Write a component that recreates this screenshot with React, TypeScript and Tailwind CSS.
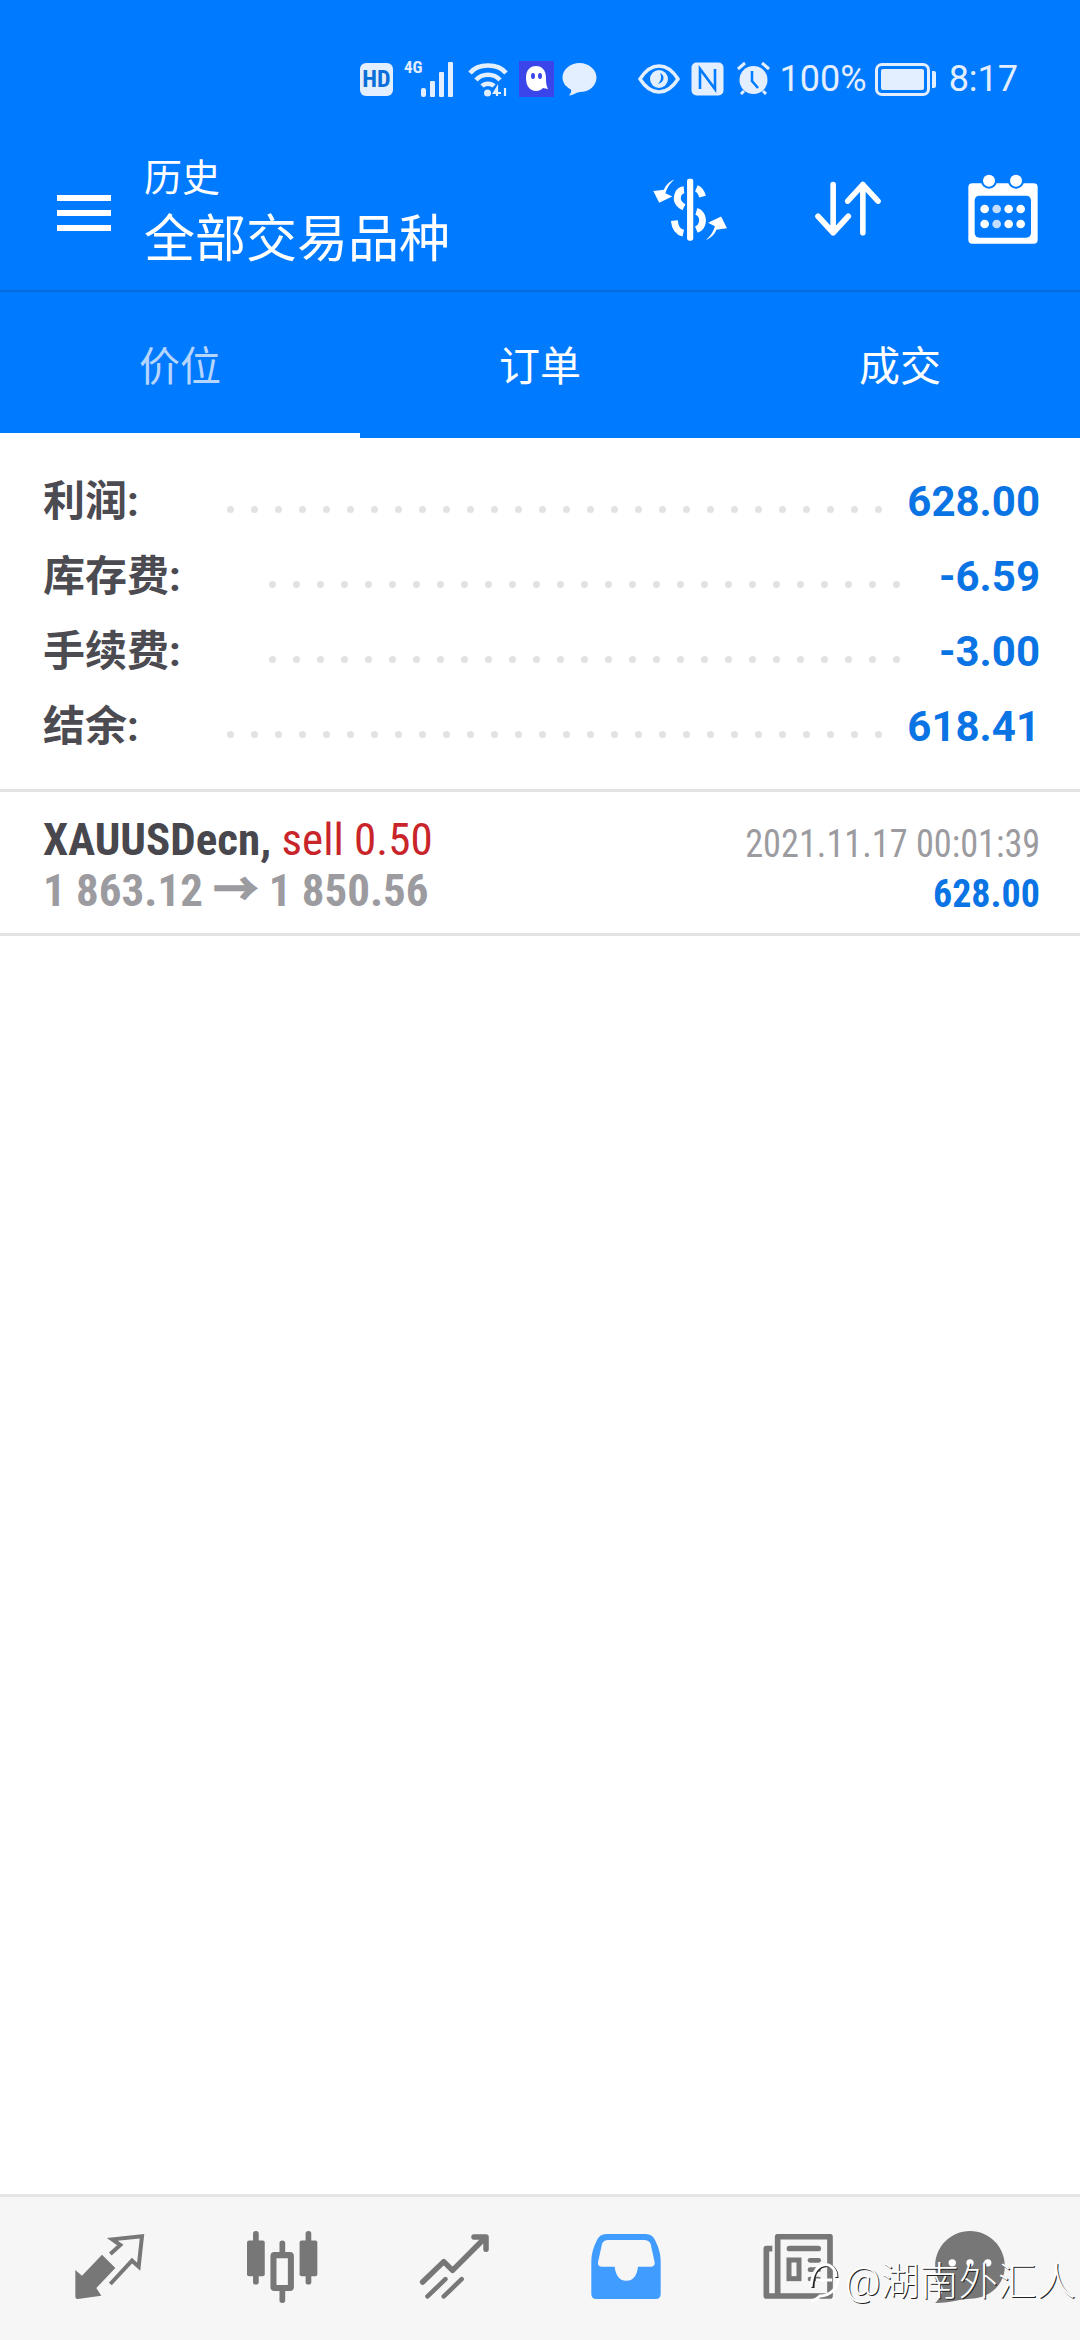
import React from 'react';

const summaryRows = [
  { label: '利润:', value: '628.00', dots: 28 },
  { label: '库存费:', value: '-6.59', dots: 27 },
  { label: '手续费:', value: '-3.00', dots: 27 },
  { label: '结余:', value: '618.41', dots: 28 },
];

const SignalIcon = () => (
  <svg width="34" height="36" viewBox="0 0 34 36" className="ml-[-2px]">
    <rect x="0" y="27" width="5" height="9" rx="2" fill="#e3eeff" />
    <rect x="9" y="20" width="5" height="16" rx="1" fill="#e3eeff" />
    <rect x="18" y="11" width="5" height="25" rx="1" fill="#e3eeff" />
    <rect x="27" y="1" width="5" height="35" rx="1" fill="#e3eeff" />
  </svg>
);

const WifiIcon = () => (
  <svg width="42" height="36" viewBox="0 0 42 36" fill="none" stroke="#e3eeff" strokeWidth="4.5">
    <path d="M2 12 C10 2 30 2 38 12" />
    <path d="M8 19 C14 12 26 12 32 19" />
    <path d="M14 25 C17 22 23 22 26 25" />
    <circle cx="19.5" cy="32" r="3.5" fill="#e3eeff" stroke="none" />
    <path d="M29 35 V27 L26 32 H33 M37 35 V27" strokeWidth="2.2" />
  </svg>
);

const GhostApp = () => (
  <div className="flex h-[36px] w-[35px] items-center justify-center bg-[#3b46ea]">
    <svg width="26" height="28" viewBox="0 0 26 28">
      <path d="M3 13 C3 4 8 1 13 1 C18 1 23 4 23 13 C23 17 23 20 25 24 L20 23 C18 25 16 26 13 26 C7 26 3 21 3 13 Z" fill="#fff" />
      <ellipse cx="10" cy="11" rx="2" ry="3" fill="#3b46ea" />
      <ellipse cx="17" cy="11" rx="2" ry="3" fill="#3b46ea" />
    </svg>
  </div>
);

const BubbleIcon = () => (
  <svg width="35" height="34" viewBox="0 0 35 34">
    <path d="M17.5 1 C27 1 34.500 8 34.500 15.500 C34.500 24 27 30 18 30 C15 30 12 33 7 33.500 C9 31 9.500 29 9 27.500 C4 25 0.500 21 0.500 15.500 C0.500 8 8 1 17.500 1 Z" fill="#e3eeff" />
  </svg>
);

const EyeIcon = () => (
  <svg width="42" height="30" viewBox="0 0 42 30" fill="none">
    <path d="M2 15 C9 4 15 2 21 2 C27 2 33 4 40 15 C33 26 27 28 21 28 C15 28 9 26 2 15 Z" stroke="#e3eeff" strokeWidth="3.5" />
    <circle cx="21" cy="15" r="9" fill="#e3eeff" />
    <path d="M22 9 C27 11 27 18 20 20 C23 17 24 13 22 9 Z" fill="#007aff" />
  </svg>
);

const NfcIcon = () => (
  <svg width="33" height="34" viewBox="0 0 33 34">
    <rect x="0.500" y="0.500" width="32" height="33" rx="5" fill="#e3eeff" />
    <path d="M9 27 V7 L24 27 V7" fill="none" stroke="#007aff" strokeWidth="2.6" />
  </svg>
);

const AlarmIcon = () => (
  <svg width="35" height="36" viewBox="0 0 35 36" fill="none">
    <circle cx="17.500" cy="19" r="14" fill="#e3eeff" />
    <path d="M16 10 V20 L22 27" stroke="#007aff" strokeWidth="2.5" />
    <path d="M2 8 L9 2 M33 8 L26 2 M5 33 L8 30 M30 33 L27 30" stroke="#e3eeff" strokeWidth="3" />
  </svg>
);

const BatteryIcon = () => (
  <div className="flex items-center gap-[2px]">
    <div className="h-[33px] w-[55px] rounded-[7px] border-[3px] border-[#e3eeff] p-[3px]">
      <div className="h-full w-full rounded-[2px] bg-[#e3eeff]" />
    </div>
    <div className="h-[17px] w-[4px] rounded-r-[2px] bg-[#e3eeff]" />
  </div>
);

const StatusBar = () => (
  <div className="flex h-[150px] items-start pt-[61px] pl-[360px] text-[#e3eeff]">
    <div className="flex h-[36px] items-center">
      <div className="flex h-[33px] w-[33px] items-center justify-center rounded-[6px] bg-[#e3eeff] text-[24px] font-bold leading-none text-[#0a6fd8] [font-stretch:75%]">
        HD
      </div>
      <div className="ml-[11px] flex h-[36px] items-start">
        <span className="mt-[-2px] text-[17px] font-bold leading-none [font-stretch:75%]">4G</span>
      </div>
      <SignalIcon />
      <div className="ml-[13px]"><WifiIcon /></div>
      <div className="ml-[9px]"><GhostApp /></div>
      <div className="ml-[8px]"><BubbleIcon /></div>
      <div className="ml-[41px]"><EyeIcon /></div>
      <div className="ml-[11px]"><NfcIcon /></div>
      <div className="ml-[12px]"><AlarmIcon /></div>
      <span className="ml-[9px] text-[36px] leading-none">100%</span>
      <div className="ml-[8px]"><BatteryIcon /></div>
      <span className="ml-[13px] text-[36px] leading-none">8:17</span>
    </div>
  </div>
);

const DollarIcon = () => (
  <svg width="77" height="64" viewBox="160 85 222 186">
    <rect x="261" y="90" width="18" height="180" rx="6" fill="#fff" />
    <path d="M252 122 C232 124 228 150 238 162 C243 168 248 171 252 173" fill="none" stroke="#fff" strokeWidth="20" />
    <path d="M288 118 C298 122 303 130 306 142 M288 185 C312 192 312 228 288 238" fill="none" stroke="#fff" strokeWidth="20" />
    <path d="M250 248 C232 244 226 232 224 212" fill="none" stroke="#fff" strokeWidth="20" />
    <path d="M224 92 C206 100 197 112 194 122 L163 126 L180 160 L218 142 L198 132 C202 118 210 104 224 92 Z" fill="#fff" />
    <path d="M316 268 C334 260 343 248 346 238 L377 234 L360 200 L322 218 L342 228 C338 242 330 256 316 268 Z" fill="#fff" />
  </svg>
);

const SortIcon = () => (
  <svg width="66" height="56" viewBox="638 97 200 168" fill="none" stroke="#fff" strokeWidth="17" strokeLinecap="round" strokeLinejoin="round">
    <path d="M693 107 V253 M647 203 L693 253 L739 203" />
    <path d="M783 107 V253 M737 157 L783 107 L829 157" />
  </svg>
);

const CalendarIcon = () => (
  <svg width="70" height="70" viewBox="1098 70 208 210">
    <rect x="1098" y="98" width="208" height="181" rx="12" fill="#fff" />
    <rect x="1117" y="135" width="169" height="126" rx="14" fill="#007aff" />
    <circle cx="1160" cy="90" r="24" fill="#007aff" />
    <circle cx="1241" cy="90" r="24" fill="#007aff" />
    <circle cx="1160" cy="90" r="18" fill="#fff" />
    <circle cx="1241" cy="90" r="18" fill="#fff" />
    <g fill="#fff">
      <circle cx="1147" cy="175" r="13" />
      <circle cx="1219" cy="175" r="13" />
      <circle cx="1255" cy="175" r="13" />
      <circle cx="1147" cy="220" r="13" />
      <circle cx="1219" cy="220" r="13" />
      <circle cx="1255" cy="220" r="13" />
    </g>
    <g fill="#c4deff">
      <circle cx="1183" cy="175" r="13" />
      <circle cx="1183" cy="220" r="13" />
    </g>
  </svg>
);

const Toolbar = () => (
  <div className="flex h-[142px] items-start border-b-[2px] border-[#0a6cd8]">
    <div className="ml-[57px] mt-[45px] flex w-[54px] flex-col gap-[9px]">
      <div className="h-[6px] bg-white" />
      <div className="h-[6px] bg-white" />
      <div className="h-[6px] bg-white" />
    </div>
    <div className="ml-[33px] mt-[4px] flex flex-col text-white">
      <span className="text-[38px] leading-[48px]">历史</span>
      <span className="mt-[6px] text-[51px] leading-[64px]">全部交易品种</span>
    </div>
    <div className="ml-auto flex items-center pr-[42px] pt-[24px]">
      <DollarIcon />
      <div className="ml-[86px]"><SortIcon /></div>
      <div className="ml-[87px]"><CalendarIcon /></div>
    </div>
  </div>
);

const Tabs = () => (
  <div className="grid h-[146px] grid-cols-3 text-center text-[41px] text-white">
    <div className="flex flex-col">
      <div className="flex flex-1 items-center justify-center pt-[11px] text-[#b5d5ff]">价位</div>
      <div className="h-[5px] bg-white" />
    </div>
    <div className="flex flex-col">
      <div className="flex flex-1 items-center justify-center pt-[11px]">订单</div>
      <div className="h-[5px]" />
    </div>
    <div className="flex flex-col">
      <div className="flex flex-1 items-center justify-center pt-[11px]">成交</div>
      <div className="h-[5px]" />
    </div>
  </div>
);

const SummaryRow = ({ label, value, dots }: { label: string; value: string; dots: number }) => (
  <div className="flex h-[75px] items-center">
    <span className="text-[42px] font-bold text-[#4b4b51]">{label}</span>
    <div className="ml-[88px] mt-[16px] flex gap-[17px]">
      {Array.from({ length: dots }).map((_, i) => (
        <div key={i} className="h-[7px] w-[7px] rounded-full bg-[#e2e2e2]" />
      ))}
    </div>
    <span className="ml-auto text-[42px] font-bold text-[#0a74e4]">{value}</span>
  </div>
);

const OrderRow = () => (
  <div className="flex h-[147px] flex-col justify-center border-y-[3px] border-[#e3e3e3] pl-[43px] pr-[40px]">
    <div className="flex h-[50px] items-start justify-between leading-[50px]">
      <div className="pt-[2px] text-[45px] [font-stretch:75%]">
        <span className="font-bold text-[#47474d]">XAUUSDecn, </span>
        <span className="text-[#c8242a]">sell 0.50</span>
      </div>
      <span className="origin-right scale-x-[0.93] pt-[6px] text-[39px] text-[#9b9ba0] [font-stretch:75%]">2021.11.17 00:01:39</span>
    </div>
    <div className="flex h-[50px] items-start justify-between leading-[50px]">
      <span className="pt-[3px] text-[45px] font-bold text-[#9b9ba0] [font-stretch:75%]">
        1 863.12 <span className="[-webkit-text-stroke:1.5px_#9b9ba0]">→</span> 1 850.56
      </span>
      <span className="pt-[6px] text-[38px] font-bold text-[#0a74e4] [font-stretch:75%]">628.00</span>
    </div>
  </div>
);

const TradeIcon = () => (
  <svg width="72" height="65" viewBox="215 160 208 195">
    <path d="M215 268 L235 285 L295 222 L335 262 L278 322 L293 345 L222 355 Q215 355 215 348 Z" fill="#777" />
    <path d="M320 220 L350 193 L326 176 L415 167 L405 258 L385 240 L320 310" fill="none" stroke="#777" strokeWidth="12" />
  </svg>
);

const CandlesIcon = () => (
  <svg width="72" height="72" viewBox="714 150 209 215">
    <g fill="#777">
      <rect x="732" y="150" width="17" height="160" rx="8" />
      <rect x="714" y="178" width="53" height="107" rx="6" />
      <rect x="889" y="150" width="17" height="160" rx="8" />
      <rect x="871" y="178" width="53" height="107" rx="6" />
      <rect x="811" y="178" width="17" height="187" rx="8" />
    </g>
    <rect x="793" y="222" width="52" height="98" rx="3" fill="#f6f6f6" stroke="#777" strokeWidth="18" />
  </svg>
);

const ChartIcon = () => (
  <svg width="73" height="65" viewBox="1212 158 212 200" fill="none" stroke="#777" strokeWidth="17" strokeLinecap="round" strokeLinejoin="round">
    <path d="M1220 306 L1285 243 L1312 270 L1410 172" />
    <path d="M1378 167 H1415 V205" />
    <path d="M1235 350 L1290 297 M1285 350 L1340 297" strokeWidth="14" />
  </svg>
);

const InboxIcon = () => (
  <svg width="72" height="65" viewBox="145 160 208 195">
    <path d="M190 160 H308 Q328 160 336 178 Q353 212 353 240 V340 Q353 355 338 355 H160 Q145 355 145 340 V240 Q145 212 162 178 Q170 160 190 160 Z" fill="#409cff" />
    <path d="M195 178 H303 Q318 178 323 190 L335 245 Q336 258 325 258 H285 Q280 300 250 300 Q220 300 215 258 H175 Q164 258 165 245 L177 190 Q182 178 195 178 Z" fill="#f6f6f6" />
  </svg>
);

const NewsIcon = () => (
  <svg width="72" height="65" viewBox="645 160 208 195">
    <path d="M672 204 H654 V346 H845 V168 H688 V346" fill="none" stroke="#777" strokeWidth="17" strokeLinejoin="round" />
    <rect x="715" y="195" width="103" height="17" rx="8" fill="#777" />
    <rect x="722" y="238" width="30" height="56" fill="none" stroke="#777" strokeWidth="15" />
    <rect x="778" y="232" width="40" height="14" rx="7" fill="#777" />
    <rect x="778" y="260" width="40" height="14" rx="7" fill="#777" />
    <rect x="778" y="288" width="40" height="14" rx="7" fill="#777" />
  </svg>
);

const ChatIcon = () => (
  <svg width="72" height="72" viewBox="1145 150 208 215">
    <path d="M1249 150 C1306 150 1353 196 1353 254 C1353 312 1306 352 1249 352 C1220 352 1200 364 1145 365 C1160 350 1166 335 1168 320 C1155 300 1145 280 1145 254 C1145 196 1192 150 1249 150 Z" fill="#777" />
    <g fill="#fff">
      <circle cx="1196" cy="245" r="11" />
      <circle cx="1249" cy="245" r="11" />
      <circle cx="1302" cy="245" r="11" />
    </g>
  </svg>
);

const BottomNav = () => (
  <div className="grid h-[146px] grid-cols-6 border-t-[3px] border-[#e6e6e6] bg-[#f6f6f6] px-[24px] pt-[37px]">
    <div className="flex justify-center"><TradeIcon /></div>
    <div className="mt-[-3px] flex justify-center"><CandlesIcon /></div>
    <div className="flex justify-center"><ChartIcon /></div>
    <div className="flex justify-center"><InboxIcon /></div>
    <div className="flex justify-center"><NewsIcon /></div>
    <div className="mt-[-3px] flex justify-center"><ChatIcon /></div>
  </div>
);

// repost watermark burned into the screenshot, sits over the bottom nav
const Watermark = () => (
  <div className="absolute bottom-[36px] left-[806px] flex items-center gap-[3px] text-[39px] leading-none text-white [text-shadow:1px_1px_0_#222]">
    <svg width="36" height="44" viewBox="0 0 32 44" fill="none" stroke="#fff" strokeWidth="3">
      <path d="M29 18 C29 8 22 4 16 6 C8 8 5 16 5 28" stroke="#222" strokeWidth="3" />
      <path d="M28 17 C28 8 21 3 15 5 C7 7 4 15 3 27" />
      <path d="M30 18 C30 28 22 36 12 36 C10 38 8 40 3 41" />
      <path d="M8 20 H24" />
    </svg>
    <span className="font-light">@湖南外汇人</span>
  </div>
);

export default function App() {
  return (
    <div className="relative flex h-[2340px] w-[1080px] flex-col overflow-hidden bg-white font-['Roboto','Noto_Sans_CJK_SC',sans-serif]">
      <div className="bg-[#007aff]">
        <StatusBar />
        <Toolbar />
        <Tabs />
      </div>
      <div className="pb-[25px] pl-[43px] pr-[40px] pt-[26px]">
        {summaryRows.map(row => (
          <SummaryRow key={row.label} {...row} />
        ))}
      </div>
      <OrderRow />
      <div className="flex-1" />
      <BottomNav />
      <Watermark />
    </div>
  );
}
